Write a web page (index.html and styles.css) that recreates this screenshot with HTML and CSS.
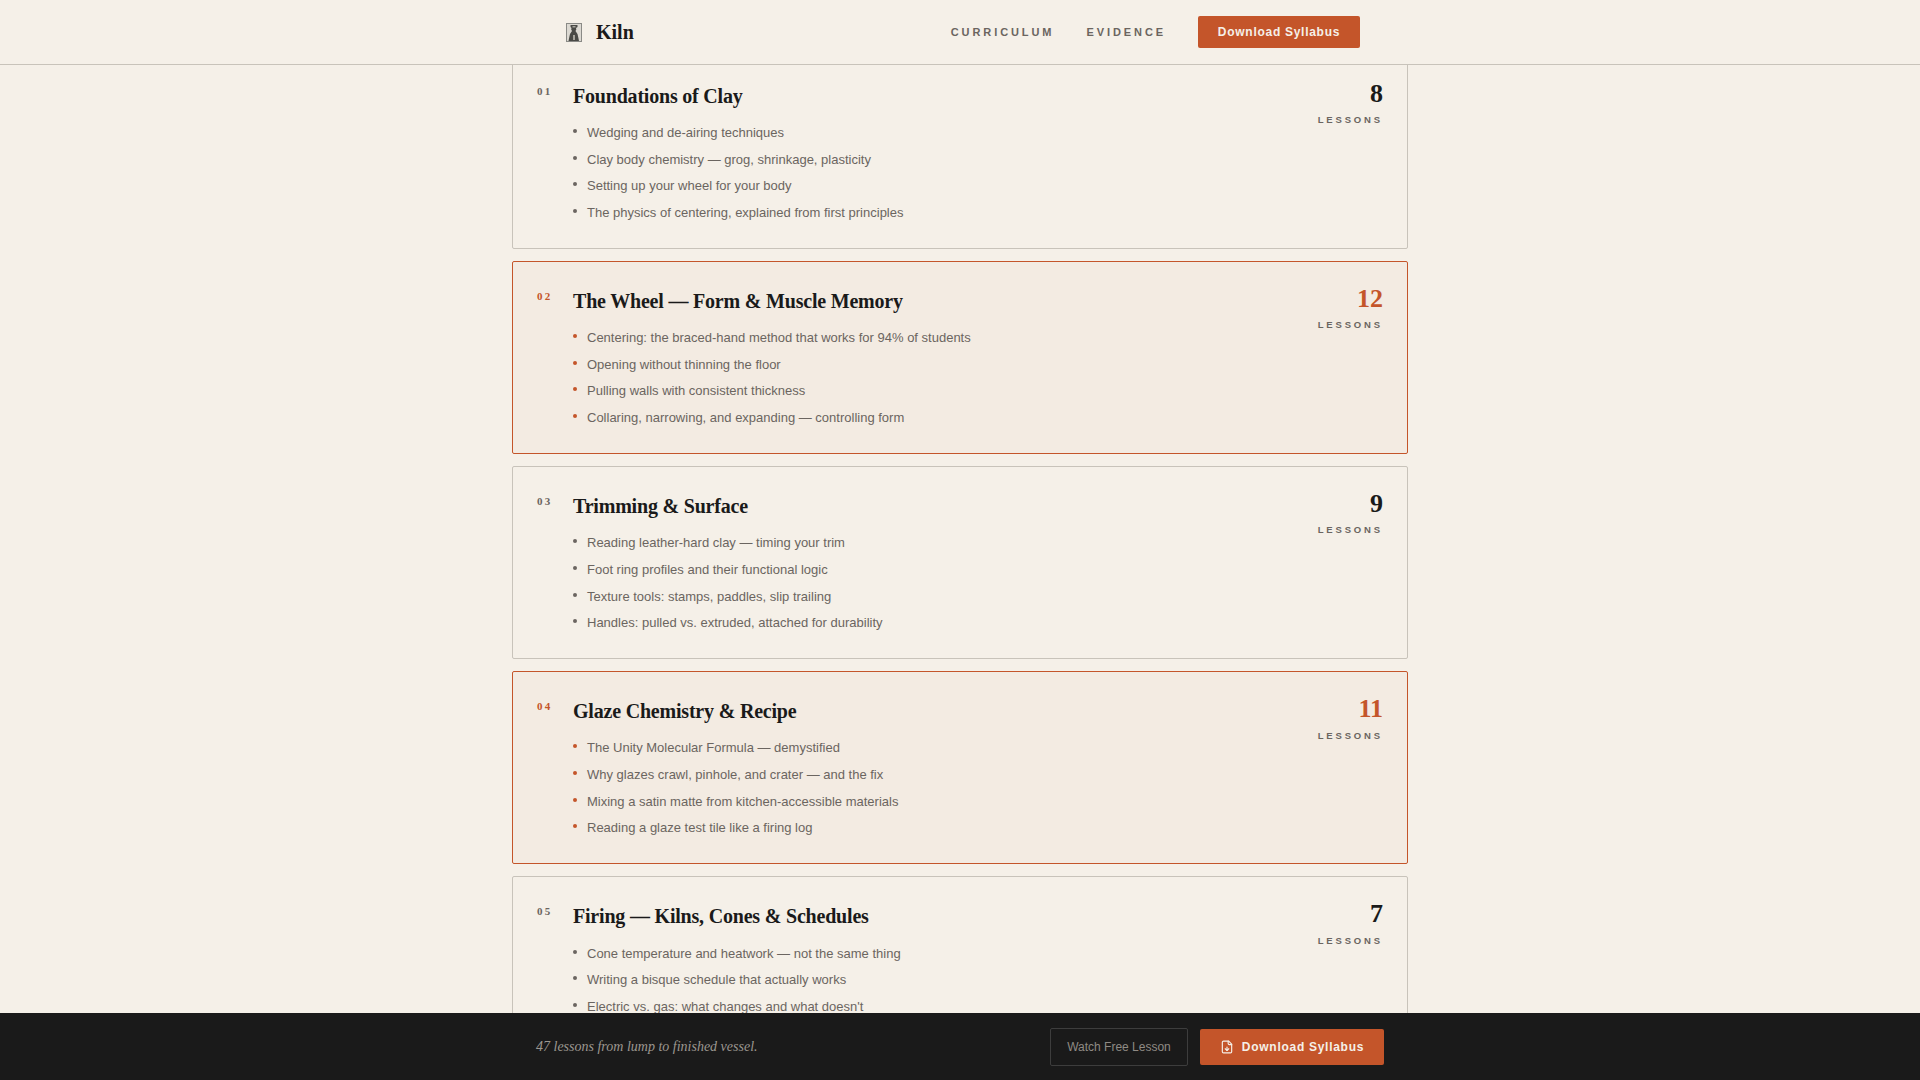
FILE: index.html
```html
<!DOCTYPE html>
<html lang="en">
<head>
<meta charset="utf-8">
<title>Kiln</title>
<link rel="stylesheet" href="styles.css">
</head>
<body>
<header class="topbar">
  <div class="topbar-inner">
    <div class="brand">
      <svg class="brand-icon" viewBox="0 0 16 19" aria-hidden="true">
        <rect x="0.5" y="0.5" width="15" height="18" fill="#dcd9d2" stroke="#8a8a86"/>
        <path d="M4.5 2h7v2l-1.5 1 .3 1.5-.8 1.5 2 3 .8 3.5.7 3.5H2.5l.7-3.5.8-3.5 2-3-.8-1.500.3-1.500L4.500 4z" fill="#4a4a46"/>
        <path d="M7 12h2v5H7zM6.500 3h3v1.500h-3z" fill="#a8a59d"/>
      </svg>
      <span class="brand-name">Kiln</span>
    </div>
    <nav class="nav">
      <a class="nav-link">Curriculum</a>
      <a class="nav-link">Evidence</a>
      <a class="btn btn-primary btn-nav">Download Syllabus</a>
    </nav>
  </div>
</header>

<main class="content">
  <div class="modules">
    <article class="module">
      <div class="module-no">01</div>
      <div class="module-body">
        <h2 class="module-title">Foundations of Clay</h2>
        <ul class="lessons">
          <li>Wedging and de-airing techniques</li>
          <li>Clay body chemistry — grog, shrinkage, plasticity</li>
          <li>Setting up your wheel for your body</li>
          <li>The physics of centering, explained from first principles</li>
        </ul>
      </div>
      <div class="module-count"><div class="count-num">8</div><div class="count-label">Lessons</div></div>
    </article>
    <article class="module module-hot">
      <div class="module-no">02</div>
      <div class="module-body">
        <h2 class="module-title">The Wheel — Form &amp; Muscle Memory</h2>
        <ul class="lessons">
          <li>Centering: the braced-hand method that works for 94% of students</li>
          <li>Opening without thinning the floor</li>
          <li>Pulling walls with consistent thickness</li>
          <li>Collaring, narrowing, and expanding — controlling form</li>
        </ul>
      </div>
      <div class="module-count"><div class="count-num">12</div><div class="count-label">Lessons</div></div>
    </article>
    <article class="module">
      <div class="module-no">03</div>
      <div class="module-body">
        <h2 class="module-title">Trimming &amp; Surface</h2>
        <ul class="lessons">
          <li>Reading leather-hard clay — timing your trim</li>
          <li>Foot ring profiles and their functional logic</li>
          <li>Texture tools: stamps, paddles, slip trailing</li>
          <li>Handles: pulled vs. extruded, attached for durability</li>
        </ul>
      </div>
      <div class="module-count"><div class="count-num">9</div><div class="count-label">Lessons</div></div>
    </article>
    <article class="module module-hot">
      <div class="module-no">04</div>
      <div class="module-body">
        <h2 class="module-title">Glaze Chemistry &amp; Recipe</h2>
        <ul class="lessons">
          <li>The Unity Molecular Formula — demystified</li>
          <li>Why glazes crawl, pinhole, and crater — and the fix</li>
          <li>Mixing a satin matte from kitchen-accessible materials</li>
          <li>Reading a glaze test tile like a firing log</li>
        </ul>
      </div>
      <div class="module-count"><div class="count-num">11</div><div class="count-label">Lessons</div></div>
    </article>
    <article class="module">
      <div class="module-no">05</div>
      <div class="module-body">
        <h2 class="module-title">Firing — Kilns, Cones &amp; Schedules</h2>
        <ul class="lessons">
          <li>Cone temperature and heatwork — not the same thing</li>
          <li>Writing a bisque schedule that actually works</li>
          <li>Electric vs. gas: what changes and what doesn't</li>
        </ul>
      </div>
      <div class="module-count"><div class="count-num">7</div><div class="count-label">Lessons</div></div>
    </article>
  </div>
</main>

<footer class="cta">
  <div class="cta-inner">
    <p class="cta-text">47 lessons from lump to finished vessel.</p>
    <div class="cta-actions">
      <a class="btn btn-ghost">Watch Free Lesson</a>
      <a class="btn btn-primary btn-cta">
        <svg class="file-icon" viewBox="0 0 24 24" fill="none" stroke="currentColor" stroke-width="2" stroke-linecap="round" stroke-linejoin="round" aria-hidden="true">
          <path d="M15 2H6a2 2 0 0 0-2 2v16a2 2 0 0 0 2 2h12a2 2 0 0 0 2-2V7Z"/>
          <path d="M14 2v4a2 2 0 0 0 2 2h4"/>
          <path d="M12 18v-6"/>
          <path d="m9 15 3 3 3-3"/>
        </svg>
        Download Syllabus
      </a>
    </div>
  </div>
</footer>
</body>
</html>
```

FILE: styles.css
```css
* { box-sizing: border-box; }
html, body { margin: 0; height: 100%; }
body {
  display: flex;
  flex-direction: column;
  height: 100vh;
  overflow: hidden;
  background: #f5f0e8;
  color: #1a1a1a;
  font-family: "Liberation Sans", Arial, sans-serif;
}
.topbar {
  flex: none;
  height: 65px;
  border-bottom: 1px solid #c8c3ba;
  background: #f5f0e8;
  position: relative;
  z-index: 2;
}
.topbar-inner {
  max-width: 800px;
  height: 64px;
  margin: 0 auto;
  display: flex;
  align-items: center;
  justify-content: space-between;
}
.brand { display: flex; align-items: center; gap: 14px; padding-left: 6px; }
.brand-icon { width: 16px; height: 19px; display: block; }
.brand-name { font: 700 20px/1 "Liberation Serif", "Times New Roman", serif; }
.nav { display: flex; align-items: center; gap: 32px; }
.nav-link {
  font-size: 11px;
  font-weight: 700;
  letter-spacing: 0.265em;
  text-transform: uppercase;
  color: #6b6560;
}
.btn {
  display: inline-flex;
  align-items: center;
  justify-content: center;
  border-radius: 2px;
  font-size: 12px;
  white-space: nowrap;
}
.btn-primary {
  background: #c4552a;
  color: #f5f0e8;
  font-weight: 700;
  letter-spacing: 0.06em;
}
.btn-nav { width: 162px; height: 32px; }
.content { flex: 1; min-height: 0; overflow: hidden; }
.modules {
  width: 896px;
  margin: -9.4px auto 0;
  display: flex;
  flex-direction: column;
  gap: 12px;
}
.module {
  display: flex;
  height: 193.2px;
  padding: 24px 24px 0;
  border: 1px solid #c8c3ba;
  border-radius: 2px;
}
.module-hot { border-color: #c4552a; background: #f3ebe2; }
.module-no {
  flex: none;
  width: 36px;
  padding-top: 3px;
  font: 700 11px/14px "Liberation Serif", serif;
  letter-spacing: 0.2em;
  color: #6b6560;
}
.module-hot .module-no, .module-hot .count-num { color: #c4552a; }
.module-body { flex: 1; min-width: 0; }
.module-title {
  margin: 0 0 10.2px;
  font: 700 20px/31px "Liberation Serif", serif;
  letter-spacing: -0.01em;
}
.lessons { margin: 0; padding: 0; list-style: none; display: flex; flex-direction: column; gap: 5.5px; }
.lessons li {
  position: relative;
  padding-left: 14px;
  font-size: 13px;
  line-height: 21.2px;
  color: #6b6560;
}
.lessons li::before {
  content: "";
  position: absolute;
  left: 0;
  top: 7px;
  width: 4px;
  height: 4px;
  border-radius: 50%;
  background: #6b6560;
}
.module-hot .lessons li::before { background: #c4552a; }
.module-count { flex: none; text-align: right; }
.count-num { font: 700 26px/26px "Liberation Serif", serif; }
.count-label {
  margin-top: 7.5px;
  font-size: 9.5px;
  font-weight: 700;
  letter-spacing: 0.3em;
  text-transform: uppercase;
  color: #6b6560;
}
.cta {
  flex: none;
  height: 67px;
  background: #1a1a1a;
  position: relative;
  z-index: 2;
}
.cta-inner {
  width: 848px;
  height: 100%;
  margin: 0 auto;
  display: flex;
  align-items: center;
  justify-content: space-between;
}
.cta-text { margin: 0; font: italic 14px "Liberation Serif", serif; color: #9c9790; }
.cta-actions { display: flex; align-items: center; gap: 12px; }
.btn-ghost { width: 138px; height: 38px; border: 1px solid #3d3d3d; color: #8f8a84; }
.btn-cta { width: 184px; height: 36px; gap: 8px; }
.file-icon { width: 14px; height: 14px; }
```
